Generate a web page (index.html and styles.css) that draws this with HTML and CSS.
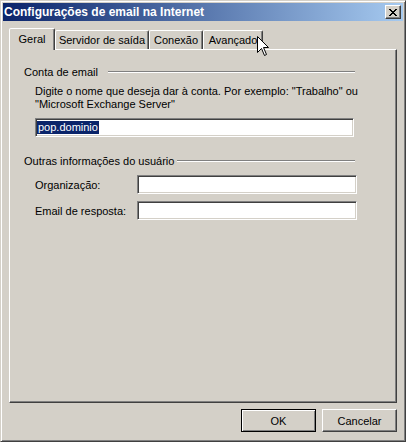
FILE: index.html
```html
<!DOCTYPE html>
<html lang="pt">
<head>
<meta charset="utf-8">
<title>Configurações de email na Internet</title>
<link rel="stylesheet" href="styles.css">
</head>
<body>
<div class="window">
  <div class="titlebar">
    <span class="title">Configurações de email na Internet</span>
    <button class="close" aria-label="Fechar">
      <svg width="8" height="7" viewBox="0 0 8 7" shape-rendering="crispEdges"><path d="M0 0h2v1H0zM6 0h2v1H6zM1 1h2v1H1zM5 1h2v1H5zM2 2h4v1H2zM3 3h2v1H3zM2 4h4v1H2zM1 5h2v1H1zM5 5h2v1H5zM0 6h2v1H0zM6 6h2v1H6z" fill="#000"/></svg>
    </button>
  </div>
  <div class="body">
    <div class="tabs">
      <div class="tab tab-sel w-geral">Geral</div>
      <div class="tab w-serv">Servidor de saída</div>
      <div class="tab w-con">Conexão</div>
      <div class="tab w-av">Avançado</div>
    </div>
    <div class="panel">
      <div class="group-head gh-1"><span class="gh-label">Conta de email</span><span class="etch"></span></div>
      <p class="desc">Digite o nome que deseja dar à conta. Por exemplo: "Trabalho" ou<br>"Microsoft Exchange Server"</p>
      <div class="edit edit-wide"><span class="sel">pop.dominio</span></div>
      <div class="group-head gh-2"><span class="gh-label">Outras informações do usuário</span><span class="etch"></span></div>
      <div class="field field-first"><label class="field-label">Organização:</label><input class="edit edit-field" type="text"></div>
      <div class="field"><label class="field-label">Email de resposta:</label><input class="edit edit-field" type="text"></div>
    </div>
    <div class="buttons">
      <button class="btn btn-default">OK</button>
      <button class="btn">Cancelar</button>
    </div>
  </div>
  <svg class="cursor" width="13" height="21" viewBox="0 0 13 21"><path d="M0.5 0.5V16.5L4.5 12.5L7.5 19.5L9.5 18.5L6.5 11.5H11.5Z" fill="#fff" stroke="#000" stroke-width="1" stroke-linejoin="miter"/></svg>
</div>
</body>
</html>
```

FILE: styles.css
```css
* { box-sizing: border-box; }

body {
  margin: 0;
  background: #D4D0C8;
  font-family: "Liberation Sans", Arial, sans-serif;
  font-size: 11px;
  color: #000;
}

.window {
  position: relative;
  width: 406px;
  height: 442px;
  border: 1px solid;
  border-color: #D4D0C8 #404040 #404040 #D4D0C8;
  box-shadow: inset 1px 1px #FFFFFF, inset -1px -1px #808080;
  background: #D4D0C8;
  padding: 2px;
}

.titlebar {
  height: 18px;
  display: flex;
  align-items: center;
  padding: 0 2px 0 1px;
  background: linear-gradient(to right, #0A246A, #A6CAF0);
  color: #fff;
  font-weight: bold;
  font-size: 12px;
}

.title {
  flex: 1;
  line-height: 18px;
  white-space: nowrap;
}

.close {
  width: 16px;
  height: 14px;
  padding: 0;
  border: 1px solid;
  border-color: #FFFFFF #404040 #404040 #FFFFFF;
  box-shadow: inset -1px -1px #808080;
  background: #D4D0C8;
  display: flex;
  align-items: center;
  justify-content: center;
}

.close svg { display: block; }

.body {
  padding: 7px 6px 0 6px;
}

.tabs {
  position: relative;
  z-index: 1;
  display: flex;
  align-items: flex-end;
  height: 21px;
}

.tab {
  height: 19px;
  border: 1px solid;
  border-bottom: none;
  border-color: #FFFFFF #404040 transparent #FFFFFF;
  box-shadow: inset -1px 0 #808080;
  border-radius: 2px 2px 0 0;
  text-align: center;
  line-height: 18px;
  white-space: nowrap;
  background: #D4D0C8;
}

.tab-sel {
  height: 22px;
  margin-bottom: -1px;
  line-height: 20px;
}

.w-geral { width: 46px; }
.w-serv { width: 94px; }
.w-con { width: 54px; }
.w-av { width: 60px; }

.panel {
  height: 354px;
  border: 1px solid;
  border-color: #FFFFFF #404040 #404040 #FFFFFF;
  box-shadow: inset -1px -1px #808080;
  padding: 15px 0 0 14px;
}

.group-head {
  display: flex;
  align-items: center;
  height: 14px;
  line-height: 14px;
  width: 331px;
}

.gh-label { flex: none; white-space: nowrap; }
.gh-1 .gh-label { width: 84px; }
.gh-2 .gh-label { width: 153px; }
.gh-2 { margin-top: 17px; }

.etch {
  flex: 1;
  height: 2px;
  border-top: 1px solid #808080;
  border-bottom: 1px solid #FFFFFF;
}

.desc {
  margin: 6px 0 0 11px;
  line-height: 13px;
  white-space: nowrap;
}

.edit {
  display: flex;
  align-items: center;
  height: 19px;
  padding: 0 0 0 1px;
  border: 1px solid;
  border-color: #808080 #FFFFFF #FFFFFF #808080;
  box-shadow: inset 1px 1px #404040, inset -1px -1px #D4D0C8;
  background: #FFFFFF;
  font: inherit;
  outline: none;
  margin: 0;
  -webkit-appearance: none;
  appearance: none;
  border-radius: 0;
}

.edit-wide {
  width: 319px;
  margin: 7px 0 0 11px;
}

.sel {
  background: #0A246A;
  color: #FFFFFF;
  padding: 0 1px;
  line-height: 13px;
}

.field {
  display: flex;
  align-items: center;
  margin: 7px 0 0 11px;
}

.field-first { margin-top: 7px; }

.field-label {
  width: 102px;
  flex: none;
  white-space: nowrap;
}

.edit-field { width: 220px; }

.buttons {
  display: flex;
  justify-content: flex-end;
  gap: 6px;
  margin-top: 6px;
}

.btn {
  width: 75px;
  height: 23px;
  padding: 0;
  font: inherit;
  color: #000;
  background: #D4D0C8;
  border: 1px solid;
  border-color: #FFFFFF #404040 #404040 #FFFFFF;
  box-shadow: inset -1px -1px #808080;
  border-radius: 0;
}

.btn-default {
  border-color: #000;
  box-shadow: inset 1px 1px #FFFFFF, inset -1px -1px #808080;
}

.cursor {
  position: absolute;
  left: 256px;
  top: 35px;
  z-index: 5;
}
```
